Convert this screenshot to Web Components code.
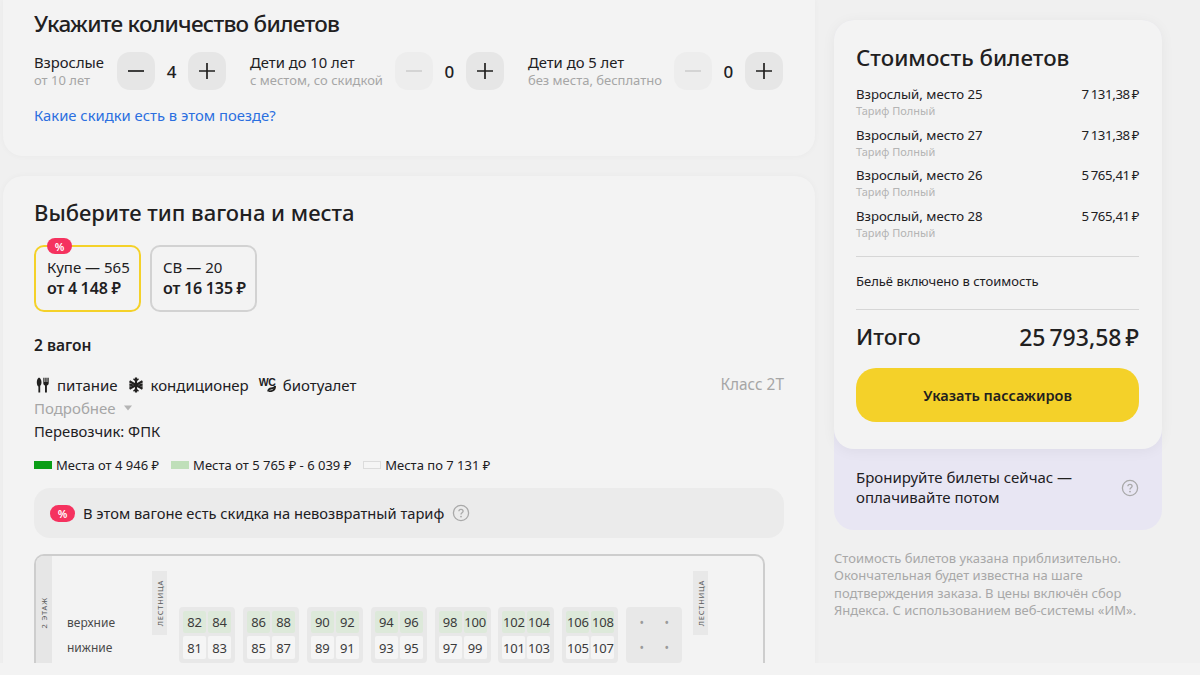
<!DOCTYPE html>
<html lang="ru"><head><meta charset="utf-8"><title>Билеты</title>
<style>
html,body{margin:0;padding:0;width:1200px;height:675px;overflow:hidden;background:#f3f3f3}
body{font-family:"Noto Sans","Liberation Sans",sans-serif;color:#21201f}
</style></head><body>
<x-app></x-app>
<script>
const def=(name,css,html)=>customElements.define(name,class extends HTMLElement{
  connectedCallback(){ if(this.shadowRoot)return; const r=this.attachShadow({mode:'open'});
    const a=n=>this.getAttribute(n)||'';
    r.innerHTML=`<style>${css}</style>`+(typeof html==='function'?html(a,this):html);}
});
const Q=`<svg viewBox="0 0 18 18" width="18" height="18" fill="none"><circle cx="9" cy="9" r="7.6" stroke="#a9a9a9" stroke-width="1.3"/><path d="M6.9 7.3c0-1.2.9-2 2.1-2s2.1.8 2.1 1.9c0 1.5-2.1 1.6-2.1 3.2" stroke="#a9a9a9" stroke-width="1.3" fill="none"/><circle cx="9" cy="12.600" r=".9" fill="#a9a9a9"/></svg>`;

def('x-counter',`:host{display:flex;align-items:center;gap:12px}
.t{min-width:var(--w,0)}
.l{font-size:14.8px;line-height:19px;white-space:nowrap}
.s{font-size:13px;line-height:17px;color:#a6a6a6;white-space:nowrap}
.c{display:flex;align-items:center;width:109px;justify-content:space-between}
.b{width:38px;height:38px;border-radius:13px;background:#e6e6e6;display:flex;align-items:center;justify-content:center}
.b.off{background:#ededed}
.n{font-size:17px;font-weight:500}`,
(a)=>{const v=a('value');const off=v==='0';const col=off?'#cfcfcf':'#21201f';
return `<div class="t"><div class="l">${a('label')}</div><div class="s">${a('sub')}</div></div>
<div class="c"><div class="b ${off?'off':''}"><svg width="16" height="16" viewBox="0 0 16 16"><path d="M0 8h16" stroke="${col}" stroke-width="1.7"/></svg></div><span class="n">${v}</span><div class="b"><svg width="16" height="16" viewBox="0 0 16 16"><path d="M0 8h16M8 0v16" stroke="#21201f" stroke-width="1.7"/></svg></div></div>`});

def('x-card',`:host{display:block;background:#f3f3f3;border-radius:20px;box-shadow:0 0 6px rgba(0,0,0,.035)}`,`<slot></slot>`);

def('x-tab',`:host{display:block;position:relative;box-sizing:border-box;width:107px;height:67px;border:2px solid #d2d2d2;border-radius:10px;padding:9px 0 0 11px}
:host([active]){border-color:#f4d129}
.a{font-size:15px;line-height:22px;white-space:nowrap}
.b{font-size:16px;line-height:20px;font-weight:600;white-space:nowrap;word-spacing:-.7px}
.p{position:absolute;left:11px;top:-9px;width:25px;height:16px;border-radius:8px;background:#f5325f;color:#fff;font-size:11px;font-weight:600;display:flex;align-items:center;justify-content:center}`,
(a,el)=>`${el.hasAttribute('active')?'<div class="p">%</div>':''}<div class="a">${a('name')}</div><div class="b">${a('price')}</div>`);

def('x-amenity',`:host{display:inline-flex;align-items:center;gap:7px;font-size:15px;line-height:20px;white-space:nowrap}`,`<slot name="i"></slot><slot></slot>`);

def('x-legend',`:host{display:inline-flex;align-items:center;gap:4px;font-size:13px;line-height:18px;white-space:nowrap}
i{display:block;width:18px;height:8px;box-sizing:border-box}`,
(a)=>`<i style="background:${a('color')};${a('line')?'border:1px solid '+a('line'):''}"></i><slot></slot>`);

def('x-compartment',`:host{display:grid;grid-template-columns:1fr 1fr;grid-template-rows:22px 23px;gap:3px 2px;width:56px;height:56px;box-sizing:border-box;padding:4px 4px 0;background:#e8e8e8;border-radius:4px;flex:none}
div{display:flex;align-items:center;justify-content:center;font-size:13px;letter-spacing:-.2px;border-radius:2px;background:#f5f5f5;color:#3b3b3b}
.u{background:#dde9da}
.e{background:none;color:#9a9a9a;font-size:12px}`,
(a)=>{const s=a('seats').split(' ');if(!a('seats'))return '<div class="e">•</div><div class="e">•</div><div class="e">•</div><div class="e">•</div>';
return `<div class="u">${s[0]}</div><div class="u">${s[1]}</div><div>${s[2]}</div><div>${s[3]}</div>`});

def('x-stair',`:host{display:flex;align-items:center;justify-content:center;width:15px;height:64px;background:#e8e8e8;flex:none}
span{writing-mode:vertical-rl;transform:rotate(180deg);font-size:7.5px;letter-spacing:.8px;color:#5c5c5c;white-space:nowrap}`,`<span><slot></slot></span>`);

def('x-seatmap',`:host{display:flex;box-sizing:border-box;height:109px;border:2px solid #cdcdcd;border-bottom:0;border-radius:10px 10px 0 0;overflow:hidden}
.f{width:16px;flex:none;background:#e6e6e6;display:flex;align-items:center;justify-content:center;padding-top:7px;box-sizing:border-box}
.f span{writing-mode:vertical-rl;transform:rotate(180deg);font-size:7.5px;letter-spacing:.9px;color:#5c5c5c;white-space:nowrap}
.m{flex:1;display:flex;align-items:flex-start;padding:15px 0 0 15px}
.lab{width:85px;flex:none;padding-top:39px;font-size:12px;line-height:25px;color:#4a4a4a}
.cs{display:flex;gap:7.9px;margin:36px 11px 0 12px}`,
()=>`<div class="f"><span>2 ЭТАЖ</span></div><div class="m"><div class="lab">верхние<br>нижние</div><x-stair>ЛЕСТНИЦА</x-stair>
<div class="cs">
<x-compartment seats="82 84 81 83"></x-compartment><x-compartment seats="86 88 85 87"></x-compartment><x-compartment seats="90 92 89 91"></x-compartment><x-compartment seats="94 96 93 95"></x-compartment><x-compartment seats="98 100 97 99"></x-compartment><x-compartment seats="102 104 101 103"></x-compartment><x-compartment seats="106 108 105 107"></x-compartment><x-compartment></x-compartment>
</div><x-stair>ЛЕСТНИЦА</x-stair></div>`);

def('x-price',`:host{display:block;height:40.6px}
.r{display:flex;justify-content:space-between;font-size:13.2px;line-height:18px;white-space:nowrap}
.r span+span{word-spacing:-1.2px;letter-spacing:-.35px}
.s{font-size:11px;line-height:15px;color:#b4b4b4}`,
(a)=>`<div class="r"><span>${a('name')}</span><span>${a('sum')}</span></div><div class="s">Тариф Полный</div>`);

def('x-summary',`:host{display:block;width:328px;flex:none;margin-top:20px}
.wrap{background:#e8e6f3;border-radius:20px}
.card{background:#f3f3f3;border-radius:20px;padding:23px 23px 27px 22px;box-shadow:0 2px 14px rgba(0,0,0,.05);height:429px;box-sizing:border-box}
h2{font-size:22.3px;line-height:30px;font-weight:500;margin:0 0 12px;white-space:nowrap}
.d{height:1px;background:#d6d6d6}
.d.f{margin-top:9px}
.note{font-size:13px;line-height:18px;padding:15px 0 19px}
.tot{display:flex;justify-content:space-between;font-size:22.5px;line-height:30px;font-weight:500;margin:12px 0 16px;white-space:nowrap}
.tot span+span{font-size:23px;word-spacing:-2px}
.btn{height:54px;border-radius:20px;background:#f4d129;display:flex;align-items:center;justify-content:center;font-size:14.5px;font-weight:600}
.bn{display:flex;align-items:center;justify-content:space-between;box-sizing:border-box;height:81px;padding:0 23px 4px 22px;font-size:15px;line-height:19.5px}
.foot{margin:20px 0 0;font-size:13px;line-height:17.3px;color:#a8a8a8}`,
`<div class="wrap"><div class="card"><h2>Стоимость билетов</h2>
<x-price name="Взрослый, место 25" sum="7 131,38 ₽"></x-price><x-price name="Взрослый, место 27" sum="7 131,38 ₽"></x-price><x-price name="Взрослый, место 26" sum="5 765,41 ₽"></x-price><x-price name="Взрослый, место 28" sum="5 765,41 ₽"></x-price>
<div class="d f"></div><div class="note">Бельё включено в стоимость</div><div class="d"></div>
<div class="tot"><span>Итого</span><span>25 793,58 ₽</span></div><div class="btn">Указать пассажиров</div></div>
<div class="bn"><span>Бронируйте билеты сейчас —<br>оплачивайте потом</span>${Q}</div></div>
<p class="foot">Стоимость билетов указана приблизительно. Окончательная будет известна на шаге подтверждения заказа. В цены включён сбор Яндекса. С использованием веб-системы «ИМ».</p>`);

def('x-app',`:host{display:block;width:1200px;height:663px;overflow:hidden;background:#f0f0f0}
.root{display:flex;gap:19px;padding-left:3px}
.left{width:812px;flex:none;display:flex;flex-direction:column;gap:20px}
.c1{border-radius:0 0 20px 20px;padding:10px 31px 0;height:156px;box-sizing:border-box;display:block}
h2{font-size:22px;line-height:28px;font-weight:500;margin:0;white-space:nowrap}
h2.n{font-size:22.5px;letter-spacing:-.72px}
.cnt{display:flex;gap:24px;margin-top:14px}
x-counter:first-child{--w:71px}
a{display:block;margin-top:15px;color:#2b6fe0;font-size:14.8px;line-height:20px;text-decoration:none}
.c2{padding:22px 31px 0;height:500px;box-sizing:border-box;border-radius:20px 20px 0 0}
.tabs{display:flex;gap:9px;margin-top:19px}
.w{font-size:15.5px;font-weight:600;line-height:20px;margin-top:23px}
.am{display:flex;justify-content:space-between;margin-top:20px;font-size:15px;line-height:20px}
.am>div{display:flex;gap:10px}
.cl{color:#a6a6a6;font-size:15.4px}
.more{font-size:15px;line-height:20px;color:#a6a6a6;margin-top:3px;display:flex;align-items:center;gap:8px}
.car{font-size:14.8px;line-height:20px;margin-top:3px}
.leg{display:flex;gap:12px;margin-top:15px;align-items:center}
.ban{display:flex;align-items:center;gap:8px;height:50px;background:#ebebeb;border-radius:16px;padding:0 16px;margin-top:14px;font-size:14.7px;white-space:nowrap}
.ban b{width:25px;height:17px;border-radius:9px;background:#f5325f;color:#fff;font-size:11px;font-weight:600;display:flex;align-items:center;justify-content:center}
x-seatmap{width:731px;margin-top:16px}
.wi{display:inline-flex;align-items:flex-start;width:17px;height:14px;position:relative}
.wc{font:700 10.5px "Liberation Sans",sans-serif;letter-spacing:-.5px;line-height:9px}
.wi svg{position:absolute;right:0;bottom:0}`,
`<div class="root"><div class="left">
<x-card class="c1"><h2 class="n">Укажите количество билетов</h2><div class="cnt">
<x-counter label="Взрослые" sub="от 10 лет" value="4"></x-counter>
<x-counter label="Дети до 10 лет" sub="с местом, со скидкой" value="0"></x-counter>
<x-counter label="Дети до 5 лет" sub="без места, бесплатно" value="0"></x-counter></div>
<a href="#">Какие скидки есть в этом поезде?</a></x-card>
<x-card class="c2"><h2>Выберите тип вагона и места</h2>
<div class="tabs"><x-tab active name="Купе — 565" price="от 4 148 ₽"></x-tab><x-tab name="СВ — 20" price="от 16 135 ₽"></x-tab></div>
<div class="w">2 вагон</div>
<div class="am"><div>
<x-amenity><svg slot="i" width="14" height="16" viewBox="0 0 14 16" fill="#21201f" style="margin-left:2px"><path d="M3 .6c1.700.9 2.500 2.700 2.500 4.700 0 1.700-.6 2.900-1.300 3.400V15.500H2.400V9.600C1.500 9 .8 7.400.8 5.300.8 3.200 1.700 1.400 3 .6z"/><path d="M7.300.8h1.200v4.200h.8V.8h1.300v4.200h.8V.8h1.300v5.400c0 1.200-.8 2-1.800 2.300V15.500H9v-7C8 8.200 7.300 7.400 7.300 6.200z"/></svg>питание</x-amenity>
<x-amenity><svg slot="i" width="16" height="16" viewBox="0 0 16 16" fill="none" stroke="#21201f" stroke-width="2.200"><path d="M8 .5v15M1.500 4.200l13 7.600M14.500 4.200l-13 7.600"/><path d="M5.500 1.800L8 4l2.500-2.200M5.500 14.200L8 12l2.500 2.200M1.400 7L4.600 8l-3.200 1.300M14.600 7l-3.200 1 3.200 1.300" stroke-width="1.500"/></svg>кондиционер</x-amenity>
<x-amenity><span slot="i" class="wi"><span class="wc">WC</span><svg width="10" height="7" viewBox="0 0 10 7" fill="none" stroke="#21201f" stroke-width="1.800"><path d="M9.500 1C8.500 3 7 3.500 5 3.500 3.500 3.500 2.500 4.500 2 6.500"/><path d="M9 1.500c0 3-2 4.800-6 4.800" /></svg></span>биотуалет</x-amenity>
</div><span class="cl">Класс 2Т</span></div>
<div class="more">Подробнее <svg width="8" height="6" viewBox="0 0 8 6"><path d="M0 .5h8L4 5.500z" fill="#b4b4b4"/></svg></div>
<div class="car">Перевозчик: ФПК</div>
<div class="leg"><x-legend color="#0a9e16">Места от 4 946 ₽</x-legend><x-legend color="#bfdfb9">Места от 5 765 ₽ - 6 039 ₽</x-legend><x-legend color="#f5f5f5" line="#dcdcdc">Места по 7 131 ₽</x-legend></div>
<div class="ban"><b>%</b><span>В этом вагоне есть скидка на невозвратный тариф</span><span style="display:flex">${Q}</span></div>
<x-seatmap></x-seatmap>
</x-card></div><x-summary></x-summary></div>`);
</script>
</body></html>
